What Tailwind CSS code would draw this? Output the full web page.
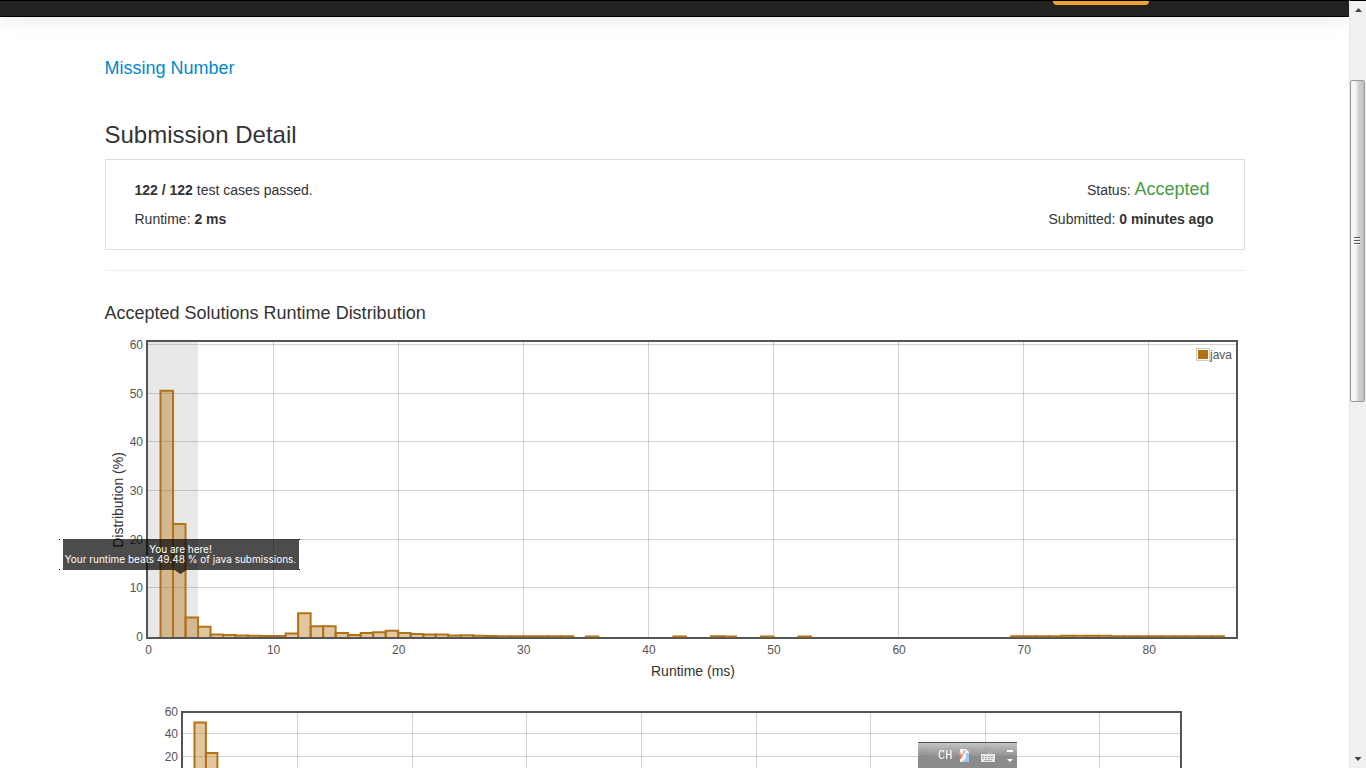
<!DOCTYPE html>
<html lang="en">
<head>
<meta charset="utf-8">
<title>Submission Detail</title>
<script src="https://cdn.jsdelivr.net/npm/@tailwindcss/browser@4"></script>
</head>
<body class="flex h-screen overflow-hidden bg-white font-['Liberation_Sans',Arial,sans-serif] text-sm text-[#333333]">
<div class="min-w-0 flex-1 overflow-hidden">
  <header class="h-[17px] border-y border-black bg-[#222222] shadow-[0_2px_20px_rgba(0,0,0,0.1)]">
    <div class="mx-auto flex max-w-[1140px] justify-end pr-24">
      <a href="#" aria-label="Premium" class="block h-1 w-24 rounded-b bg-[#f0a32f]"></a>
    </div>
  </header>
  <main class="mx-auto max-w-[1140px] pt-[37px]">
    <h4 class="text-lg leading-7"><a href="#" class="text-[#0088cc]">Missing Number</a></h4>
    <h3 class="mt-[37px] text-2xl leading-8">Submission Detail</h3>
    <section class="mt-2 flex justify-between border border-[#dddddd] px-7 pt-4 pb-[15px] leading-[29px]">
      <div class="pl-px">
        <p><strong>122 / 122</strong> test cases passed.</p>
        <p>Runtime: <strong>2 ms</strong></p>
      </div>
      <div class="pr-0.5 text-right">
        <p class="pr-1">Status: <span class="text-lg leading-none text-[#449d44]">Accepted</span></p>
        <p>Submitted: <strong>0 minutes ago</strong></p>
      </div>
    </section>
    <hr class="mt-5 border-[#eeeeee]">
    <h4 class="mt-7 text-lg leading-7">Accepted Solutions Runtime Distribution</h4>
    <figure class="relative mt-2">
      <svg id="distribution" viewBox="0 0 1140 350" class="block w-full" role="img" aria-label="Runtime distribution"></svg>
      <div class="absolute top-[204px] -left-[42px] w-[236px] bg-black/70 px-0.5 pt-[5px] pb-1.5 text-center font-[Inter,'Liberation_Sans',sans-serif] text-[10px] leading-[10px] whitespace-nowrap text-white">
        You are here!<br>Your runtime beats 49.48 % of java submissions.
        <span class="absolute top-full left-[112px] h-1 w-3 bg-black/70 [clip-path:polygon(0_0,100%_0,50%_100%)]"></span>
        <span class="absolute top-0 -left-1 h-px w-px bg-black"></span>
        <span class="absolute bottom-0 -left-1 h-px w-px bg-black"></span>
        <span class="absolute top-0 -right-px h-px w-px bg-black"></span>
        <span class="absolute -right-px bottom-0 h-px w-px bg-black"></span>
      </div>
    </figure>
    <figure class="mt-2.5">
      <svg id="overview" viewBox="0 0 1140 110" class="block w-full" role="img" aria-label="Runtime overview"></svg>
    </figure>
  </main>
</div>

<div class="relative flex w-[17px] shrink-0 flex-col border-t border-l border-black border-l-[#e6e6e6] bg-[#f0f0f0]" aria-hidden="true">
  <svg class="h-4 w-4" viewBox="0 0 16 16"><path d="M5 11L8.500 7L12 11Z" fill="#444"/></svg>
  <div class="mt-[63px] flex h-[322px] w-[15px] items-center justify-center rounded-xs border border-[#979797] bg-linear-to-r from-[#f5f5f5] from-35% via-[#cfcfcf] via-60% to-[#c0c0c0]">
    <svg class="h-2 w-3" viewBox="0 0 12 8"><path d="M2 0h6v1H2zM2 3h6v1H2zM2 6h6v1H2z" fill="#555"/><path d="M2 1h6v1H2zM2 4h6v1H2zM2 7h6v1H2z" fill="#fff"/></svg>
  </div>
  <svg class="mt-auto h-4 w-4" viewBox="0 0 16 16"><path d="M4.500 5H11.500L8 9Z" fill="#444"/></svg>
</div>

<div class="fixed right-[349px] bottom-0 flex h-[26px] w-[99px] items-center border-t border-[#555555] bg-linear-to-b from-[#b4b4b4]/80 to-[#777777]/85 to-60% pl-1 text-white">
  <svg class="h-4 w-2 shrink-0" viewBox="0 0 8 16" fill="#8a8a8a"><path d="M1 1h1v1H1zM4 1h1v1H4zM1 4h1v1H1zM4 4h1v1H4zM1 7h1v1H1zM4 7h1v1H4zM1 10h1v1H1zM4 10h1v1H4z"/></svg>
  <span class="ml-2 font-['Liberation_Mono',monospace] text-xs leading-4">CH</span>
  <svg class="ml-1.5 h-4 w-3 shrink-0" viewBox="0 0 12 16"><path d="M2 1h6l3 3v10H2z" fill="#f4f6fb"/><path d="M8 5h3v9H4l4-4z" fill="#a9c4ea"/><path d="M1 4l3 4 3-6" fill="none" stroke="#e9a48c" stroke-width="1.500"/><path d="M1 6l3 2-1 3H1z" fill="#e0795a"/></svg>
  <svg class="ml-2.5 h-4 w-4 shrink-0" viewBox="0 0 16 16"><path d="M9 6V4h3" fill="none" stroke="#bbb"/><rect x="1" y="6" width="14" height="8" fill="#e8e8e8"/><path d="M2 8.500h12M2 10.500h12" stroke="#aaa" stroke-dasharray="2 1"/><path d="M4 12.500h8" stroke="#aaa"/></svg>
  <svg class="ml-2.5 h-4 w-2 shrink-0" viewBox="0 0 8 16" fill="#fff"><path d="M1 2h6v2H1zM1 11h6L4 14z"/></svg>
</div>

<script>
  const runtimes = {
    1: 50.6, 2: 23.2, 3: 4, 4: 2.1, 5: .5, 6: .4, 7: .3, 8: .25, 9: .2, 10: .2, 11: .7, 12: 4.9,
    13: 2.2, 14: 2.2, 15: .8, 16: .4, 17: .8, 18: 1, 19: 1.3, 20: .8, 21: .6, 22: .5, 23: .5,
    24: .3, 25: .35, 26: .25, 27: .2, 28: .15, 29: .15, 30: .15, 31: .15, 32: .15, 33: .15,
    35: .1, 42: .1, 45: .15, 46: .1, 49: .1, 52: .1
  };
  for (let ms = 69; ms <= 85; ms++) runtimes[ms] = ms > 72 && ms < 77 ? .25 : .15;

  function axisText(x, y, value, anchor) {
    return `<text x="${x}" y="${y}" text-anchor="${anchor}" font-size="12" fill="#545454">${value}</text>`;
  }

  // c: left, right, top, base = frame edges; unit, scale = pixels per ms and per percent
  function plot(c) {
    let out = '';
    if (c.band) out += `<rect x="${c.left}" y="${c.top}" width="${c.band * c.unit}" height="${c.base - c.top}" fill="#e8e8e8"/>`;
    for (let v = 10; v <= 80; v += 10) {
      const x = Math.floor(c.left + v * c.unit) + .5;
      out += `<path d="M${x} ${c.top}V${c.base}" stroke="#545454" stroke-opacity=".26"/>`;
    }
    for (let v = c.first; v <= 60; v += c.step) {
      const y = Math.round(c.base - v * c.scale) - .5;
      if (v) out += `<path d="M${c.left} ${y}H${c.right}" stroke="#545454" stroke-opacity=".26"/>`;
      out += axisText(c.left - 5, y + 4, v, 'end');
    }
    out += `<rect x="${c.left - 1}" y="${c.top}" width="${c.right - c.left}" height="${c.base + 1 - c.top}" fill="none" stroke="#545454" stroke-width="2"/>`;
    for (const ms in runtimes) {
      const x = c.left + ms * c.unit, y = c.base - runtimes[ms] * c.scale;
      out += `<path d="M${x} ${c.base}V${y}H${x + c.unit}V${c.base}" fill="#b5700f" fill-opacity=".4" stroke="#b07318" stroke-width="2"/>`;
    }
    return out;
  }

  let main = plot({ left: 43, right: 1133, top: 6, base: 302, unit: 12.51, scale: 4.867, first: 0, step: 10, band: 4 });
  for (let v = 0; v <= 80; v += 10) main += axisText(43.500 + v * 12.51, 319, v, 'middle');
  main += `<text x="588" y="341" text-anchor="middle" font-size="14" fill="#333">Runtime (ms)</text>
    <text transform="translate(18 165) rotate(-90)" text-anchor="middle" font-size="14" fill="#333">Distribution (%)</text>
    <rect x="1091.5" y="13.5" width="13" height="12" fill="#fff" stroke="#ccc"/>
    <rect x="1093" y="15" width="10" height="9" fill="#b5700f"/>` + axisText(1127, 24, 'java', 'end');
  document.getElementById('distribution').innerHTML = main;
  document.getElementById('overview').innerHTML =
    plot({ left: 78, right: 1077, top: 17, base: 84, unit: 11.46, scale: 1.117, first: 20, step: 20 });
</script>
</body>
</html>
